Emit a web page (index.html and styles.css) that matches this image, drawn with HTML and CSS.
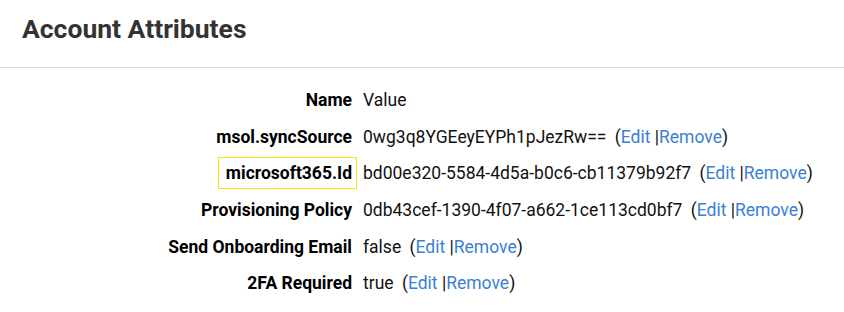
FILE: index.html
```html
<!DOCTYPE html>
<html lang="en">
<head>
    <meta charset="UTF-8">
    <meta name="viewport" content="width=device-width, initial-scale=1.0">
    <title>Account Attributes</title>
    <link rel="stylesheet" href="styles.css">
</head>
<body>
    <div class="header">
        <h2>Account Attributes</h2>
    </div>

    <div class="attributes">
        <div class="attr-name">Name</div>
        <div class="attr-value">Value</div>

        <div class="attr-name">msol.syncSource</div>
        <div class="attr-value">0wg3q8YGEeyEYPh1pJezRw== <span class="actions">(<a href="#">Edit</a> |<a href="#">Remove</a>)</span></div>

        <div class="attr-name"><span class="highlight">microsoft365.Id</span></div>
        <div class="attr-value">bd00e320-5584-4d5a-b0c6-cb11379b92f7 <span class="actions">(<a href="#">Edit</a> |<a href="#">Remove</a>)</span></div>

        <div class="attr-name">Provisioning Policy</div>
        <div class="attr-value">0db43cef-1390-4f07-a662-1ce113cd0bf7 <span class="actions">(<a href="#">Edit</a> |<a href="#">Remove</a>)</span></div>

        <div class="attr-name">Send Onboarding Email</div>
        <div class="attr-value">false <span class="actions">(<a href="#">Edit</a> |<a href="#">Remove</a>)</span></div>

        <div class="attr-name">2FA Required</div>
        <div class="attr-value">true <span class="actions">(<a href="#">Edit</a> |<a href="#">Remove</a>)</span></div>
    </div>
</body>
</html>
```

FILE: styles.css
```css
* {
    margin: 0;
    padding: 0;
    box-sizing: border-box;
}

body {
    font-family: Roboto, "Liberation Sans", sans-serif;
    font-size: 17.5px;
    color: #111;
    background: #fff;
}

.header {
    height: 68px;
    padding: 13px 22px 0;
    border-bottom: 1px solid #dcdcdc;
}

.header h2 {
    font-size: 26.5px;
    font-weight: 700;
    color: #333;
    line-height: 32px;
}

.attributes {
    display: grid;
    grid-template-columns: 357px auto;
    grid-auto-rows: 36.6px;
    padding-top: 14px;
    align-items: center;
}

.attr-name {
    text-align: right;
    font-weight: 700;
    padding-right: 5px;
    color: #000;
}

.attr-value {
    padding-left: 6px;
    color: #111;
    white-space: nowrap;
}

.highlight {
    display: inline-block;
    padding: 5px 4px 5px 7px;
    margin-right: -5px;
    border: 1px solid #f5e60a;
}

.actions {
    margin-left: 4px;
}

.actions a {
    color: #3a7fd5;
    text-decoration: none;
}
```
